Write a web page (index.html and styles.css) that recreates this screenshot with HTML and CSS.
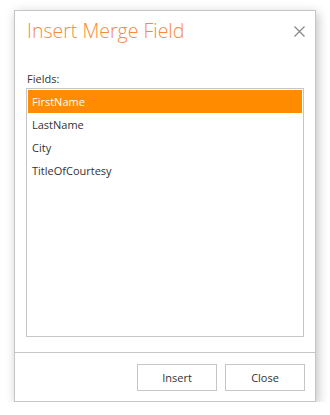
FILE: index.html
```html
<!DOCTYPE html>
<html>
<head>
    <meta charset="utf-8"/>
    <title>Insert Merge Field</title>
    <link rel="stylesheet" href="styles.css">
</head>
<body>
<div class="dialog">
    <div class="dialog-header">
        <span class="dialog-title">Insert Merge Field</span>
        <span class="dialog-close">
            <svg width="11" height="11" viewBox="0 0 11 11">
                <path d="M0.5 0.5 L10.5 10.5 M10.5 0.5 L0.5 10.5" stroke="#8a8a8a" stroke-width="1.3" fill="none"/>
            </svg>
        </span>
    </div>
    <div class="dialog-body">
        <label class="field-label">Fields:</label>
        <ul class="field-list">
            <li class="selected">FirstName</li>
            <li>LastName</li>
            <li>City</li>
            <li>TitleOfCourtesy</li>
        </ul>
    </div>
    <div class="dialog-footer">
        <button class="btn">Insert</button>
        <button class="btn">Close</button>
    </div>
</div>
</body>
</html>
```

FILE: styles.css
```css
html, body {
    margin: 0;
    padding: 0;
    background: #fff;
}

body {
    font-family: "Open Sans", "Noto Sans", Arial, sans-serif;
    font-size: 11px;
    color: #333;
}

.dialog {
    box-sizing: border-box;
    width: 302px;
    height: 392px;
    margin: 10px 0 0 14px;
    border: 1px solid #c6c6c6;
    background: #fff;
    box-shadow: 2px 3px 10px rgba(0, 0, 0, 0.25);
    display: flex;
    flex-direction: column;
}

.dialog-header {
    box-sizing: border-box;
    display: flex;
    justify-content: space-between;
    align-items: flex-start;
    padding: 7px 10px 0 12px;
    height: 48px;
}

.dialog-title {
    color: #f78a3a;
    font-size: 19.5px;
    font-weight: 300;
    line-height: 26px;
}

.dialog-close {
    margin-top: 8px;
    line-height: 0;
}

.dialog-body {
    padding: 12px 11px 0 11px;
    flex: 1;
}

.field-label {
    display: block;
    line-height: 15px;
    margin-left: 1px;
}

.field-list {
    list-style: none;
    margin: 2px 0 0 0;
    padding: 1px;
    height: 249px;
    box-sizing: border-box;
    border: 1px solid #c6c6c6;
}

.field-list li {
    height: 23px;
    line-height: 23px;
    padding-left: 4px;
}

.field-list li.selected {
    background: #ff8c00;
    color: #fff;
}

.dialog-footer {
    border-top: 1px solid #c6c6c6;
    display: flex;
    justify-content: flex-end;
    gap: 8px;
    padding: 11px 10px 10px 0;
}

.btn {
    width: 80px;
    height: 27px;
    background: #fff;
    border: 1px solid #c6c6c6;
    font-family: "Open Sans", "Noto Sans", Arial, sans-serif;
    font-size: 11px;
    color: #333;
    padding: 0;
}
```
